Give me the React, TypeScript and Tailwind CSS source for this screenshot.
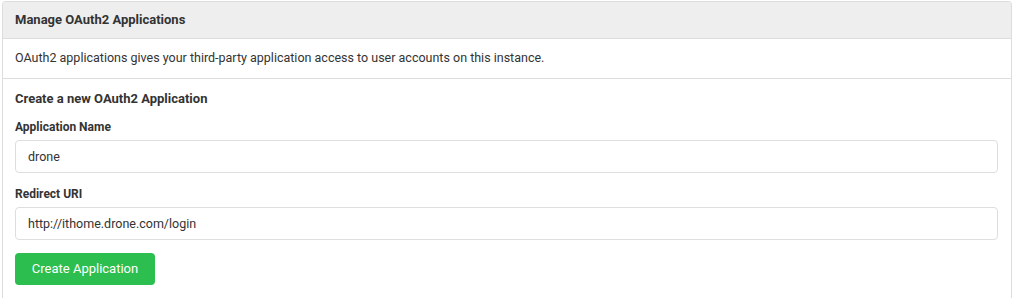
export default function App() {
  return (
    <div className="h-[298px] w-[1024px] overflow-hidden bg-white pl-[2px] pt-[1px] font-['Roboto','Liberation_Sans',sans-serif] text-[#333333]">
      <div className="w-[1010px] rounded-t-[3px] border border-[#dddddd]">
        <div className="flex h-[37px] items-center border-b border-[#dddddd] bg-[#eeeeee] px-3 text-[13px] font-bold">
          Manage OAuth2 Applications
        </div>
        <div className="flex h-[40px] items-center border-b border-[#dddddd] px-3 text-[12.5px]">
          OAuth2 applications gives your third-party application access to user accounts on this instance.
        </div>
        <div className="px-3 pt-[11px] pb-4">
          <h2 className="text-[13px] font-bold leading-[18px]">Create a new OAuth2 Application</h2>
          <label className="mt-[11px] block text-[12px] font-bold leading-[16px]">Application Name</label>
          <input
            className="mt-[5px] block h-[33px] w-[983px] rounded-[4px] border border-[#dedede] px-3 text-[12.5px] text-[#333333] outline-none"
            defaultValue="drone"
          />
          <label className="mt-[13px] block text-[12px] font-bold leading-[16px]">Redirect URI</label>
          <input
            className="mt-[5px] block h-[33px] w-[983px] rounded-[4px] border border-[#dedede] px-3 text-[12.5px] text-[#333333] outline-none"
            defaultValue="http://ithome.drone.com/login"
          />
          <button className="mt-[13px] h-[32px] w-[140px] rounded-[4px] bg-[#2cbe4e] text-[13px] text-white">
            Create Application
          </button>
        </div>
      </div>
    </div>
  );
}
